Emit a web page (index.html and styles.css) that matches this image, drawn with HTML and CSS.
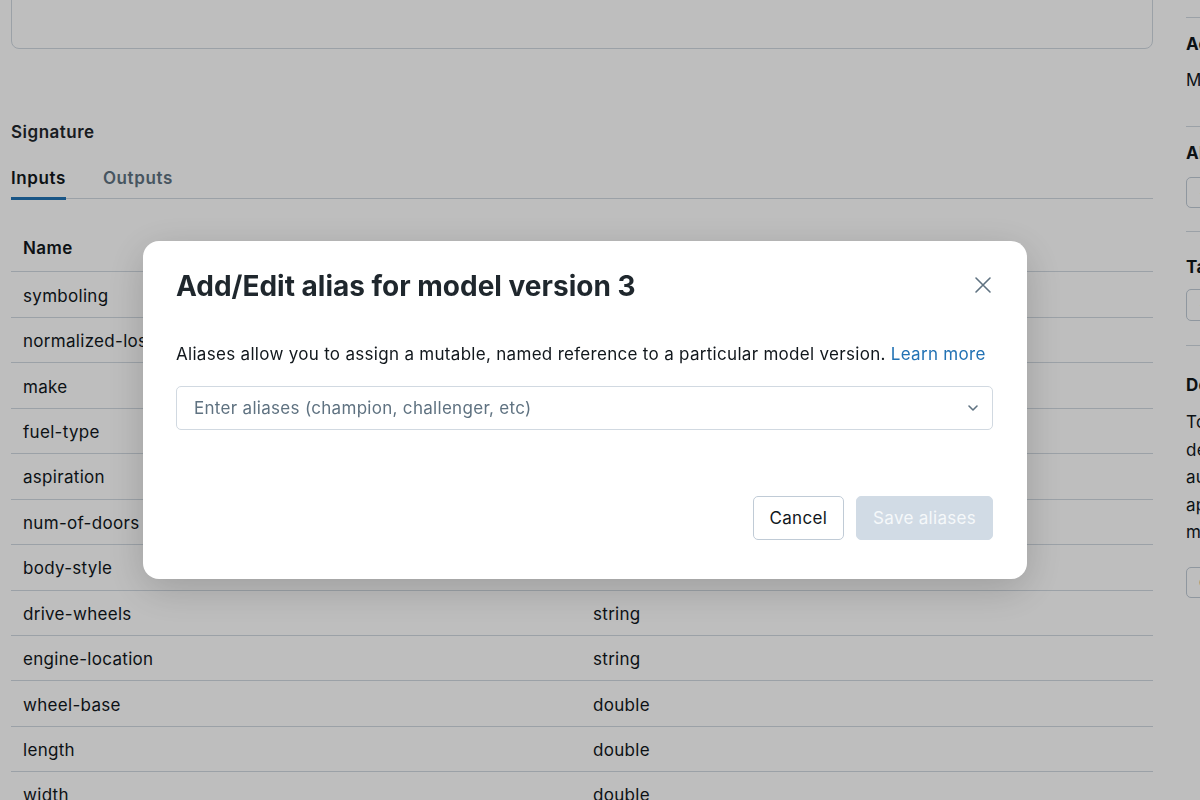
FILE: index.html
```html
<!DOCTYPE html>
<html lang="en">
<head>
<meta charset="utf-8">
<title>Model version 3</title>
<link rel="stylesheet" href="styles.css">
</head>
<body>
<div class="page">
  <main class="main">
    <div class="top-box"><span class="empty-text">No input example</span></div>

    <h2 class="section-title">Signature</h2>
    <div class="tabs">
      <div class="tab active">Inputs</div>
      <div class="tab">Outputs</div>
    </div>

    <div class="table">
      <div class="row head"><div class="cell">Name</div><div class="cell">Type</div></div>
      <div class="row"><div class="cell">symboling</div><div class="cell">integer</div></div>
      <div class="row"><div class="cell">normalized-losses</div><div class="cell">double</div></div>
      <div class="row"><div class="cell">make</div><div class="cell">string</div></div>
      <div class="row"><div class="cell">fuel-type</div><div class="cell">string</div></div>
      <div class="row"><div class="cell">aspiration</div><div class="cell">string</div></div>
      <div class="row"><div class="cell">num-of-doors</div><div class="cell">string</div></div>
      <div class="row"><div class="cell">body-style</div><div class="cell">string</div></div>
      <div class="row"><div class="cell">drive-wheels</div><div class="cell">string</div></div>
      <div class="row"><div class="cell">engine-location</div><div class="cell">string</div></div>
      <div class="row"><div class="cell">wheel-base</div><div class="cell">double</div></div>
      <div class="row"><div class="cell">length</div><div class="cell">double</div></div>
      <div class="row"><div class="cell">width</div><div class="cell">double</div></div>
    </div>
  </main>

  <aside class="sidebar">
    <section class="side-section s1">
      <h3 class="side-title">Activity</h3>
      <p class="side-text">Model version created</p>
    </section>
    <section class="side-section s2">
      <h3 class="side-title">Aliases</h3>
      <div class="side-btn">+ Add</div>
    </section>
    <section class="side-section s3">
      <h3 class="side-title">Tags</h3>
      <div class="side-btn">+ Add</div>
    </section>
    <section class="side-section s4">
      <h3 class="side-title">Deployment</h3>
      <p class="side-para">To<br>deploy<br>automatically<br>apply<br>model</p>
      <div class="side-btn">Create</div>
    </section>
  </aside>
</div>

<div class="overlay">
  <div class="modal" role="dialog">
    <div class="modal-header">
      <h1 class="modal-title">Add/Edit alias for model version 3</h1>
      <button class="close" aria-label="Close">
        <svg width="18" height="18" viewBox="0 0 18 18"><path d="M2 2 L16 16 M16 2 L2 16" stroke="#5f7281" stroke-width="1.6" fill="none" stroke-linecap="round"/></svg>
      </button>
    </div>
    <p class="modal-text">Aliases allow you to assign a mutable, named reference to a particular model version. <a class="link">Learn more</a></p>
    <div class="select">
      <span class="placeholder">Enter aliases (champion, challenger, etc)</span>
      <svg class="chev" width="12" height="8" viewBox="0 0 12 8"><path d="M2 2 L6 6 L10 2" stroke="#5f7281" stroke-width="1.6" fill="none" stroke-linecap="round" stroke-linejoin="round"/></svg>
    </div>
    <div class="modal-footer">
      <button class="btn cancel">Cancel</button>
      <button class="btn save">Save aliases</button>
    </div>
  </div>
</div>
</body>
</html>
```

FILE: styles.css
```css
* { box-sizing: border-box; }

html, body {
  margin: 0;
  height: 100%;
  overflow: hidden;
}

body {
  font-family: Inter, "Noto Sans", sans-serif;
  color: #1f272d;
  background: #fff;
  font-size: 17px;
  letter-spacing: 0.3px;
}

.page {
  display: flex;
  margin-top: -31px;
}

.main {
  width: 1142px;
  margin-left: 11px;
  flex-shrink: 0;
}

.top-box {
  height: 80px;
  border: 1px solid #d1d9e1;
  border-radius: 8px;
  text-align: center;
  padding-top: 10px;
  color: #6a7b8c;
  font-size: 15px;
  line-height: 20px;
}

.section-title {
  margin: 71px 0 0;
  font-size: 17px;
  font-weight: 600;
  line-height: 24px;
  letter-spacing: 0.5px;
}

.tabs {
  display: flex;
  gap: 37px;
  margin-top: 22px;
  border-bottom: 1px solid #d1d9e1;
}

.tab {
  font-size: 17px;
  font-weight: 600;
  line-height: 24px;
  letter-spacing: 0.6px;
  padding-bottom: 7px;
  border-bottom: 3px solid transparent;
  margin-bottom: -2px;
  color: #5f7281;
}

.tab.active {
  color: #11171c;
  border-bottom-color: #2272b4;
}

.table {
  margin-top: 28px;
}

.row {
  display: grid;
  grid-template-columns: 570px 1fr;
  height: 45.45px;
  border-bottom: 1px solid #d1d9e1;
  align-items: center;
  padding-top: 2px;
}

.row.head {
  padding-top: 0;
  padding-bottom: 2px;
}

.cell {
  padding-left: 12px;
  font-size: 17px;
  color: #11171c;
}

.row.head .cell {
  font-weight: 600;
  letter-spacing: 0.4px;
}

.sidebar {
  margin-left: 33px;
  width: 240px;
  flex-shrink: 0;
  padding-top: 48px;
}

.side-section {
  border-top: 1px solid #d1d9e1;
}

.s1 { padding: 14px 0 34px; }
.s2 { padding: 14px 0 23px; }
.s3 { padding: 23px 0 24px; }
.s4 { padding: 27px 0 24px; }

.side-title {
  margin: 0;
  font-size: 17px;
  font-weight: 700;
  line-height: 24px;
  color: #11171c;
}

.side-text {
  margin: 12px 0 0;
  line-height: 24px;
  color: #11171c;
}

.side-btn {
  margin-top: 12px;
  display: inline-block;
  height: 31px;
  padding: 0 12px;
  border: 1px solid #c0cbd6;
  border-radius: 5px;
  line-height: 29px;
  font-size: 15px;
}

.s3 .side-btn { margin-top: 10px; height: 32px; line-height: 30px; }
.s4 .side-btn { margin-top: 20px; height: 31px; }

.side-para {
  margin: 12px 0 0;
  line-height: 27.5px;
  color: #11171c;
}

.overlay {
  position: fixed;
  inset: 0;
  background: rgba(0, 0, 0, 0.255);
  padding: 241px 0 0 143px;
}

.modal {
  width: 884px;
  height: 338px;
  background: #fff;
  border-radius: 16px;
  box-shadow: 0 10px 40px rgba(0, 0, 0, 0.18);
  padding: 28px 34px 39px 33px;
  display: flex;
  flex-direction: column;
}

.modal-header {
  display: flex;
  align-items: center;
  justify-content: space-between;
}

.modal-title {
  margin: 0;
  font-size: 28px;
  font-weight: 700;
  line-height: 34px;
  color: #1f272d;
  letter-spacing: 0;
}

.close {
  width: 24px;
  height: 24px;
  padding: 0;
  border: 0;
  background: none;
  display: flex;
  align-items: center;
  justify-content: center;
  margin-right: -2px;
  margin-top: -2px;
}

.modal-text {
  margin: 39px 0 0;
  font-size: 17px;
  line-height: 24px;
  color: #11171c;
}

.link {
  color: #2272b4;
}

.select {
  margin-top: 20px;
  height: 44px;
  border: 1px solid #d1d9e1;
  border-radius: 5px;
  display: flex;
  align-items: center;
  justify-content: space-between;
  padding: 0 13px 0 17px;
}

.placeholder {
  color: #5f7281;
  font-size: 17px;
}

.modal-footer {
  margin-top: auto;
  display: flex;
  justify-content: flex-end;
  gap: 12px;
}

.btn {
  height: 44px;
  border-radius: 5px;
  font-family: Inter, "Noto Sans", sans-serif;
  font-size: 17px;
  letter-spacing: 0.3px;
  padding: 0 16px;
}

.cancel {
  background: #fff;
  border: 1px solid #c0cbd6;
  color: #11171c;
}

.save {
  background: #d1dbe5;
  border: 1px solid #d1dbe5;
  color: #f5f8fa;
}
```
